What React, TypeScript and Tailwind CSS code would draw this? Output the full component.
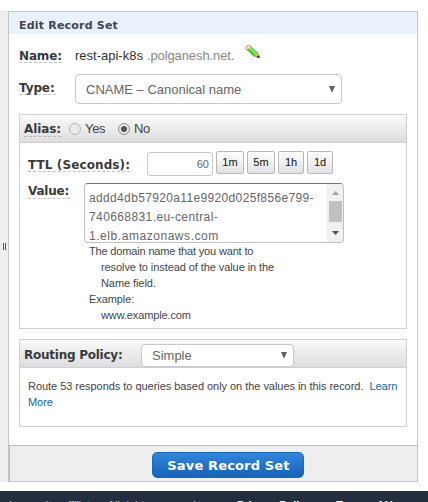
import type { ReactNode } from "react";

const sans = "font-['Liberation_Sans',Arial,sans-serif]";
const wide = "font-['DejaVu_Sans',Verdana,sans-serif] font-bold";

function Label({ children, className = "" }: { children: ReactNode; className?: string }) {
  return (
    <span
      className={`${wide} block h-4 shrink-0 whitespace-nowrap border-b border-dashed text-[12px] leading-[17px] text-[#3a3a3a] ${className}`}
    >
      {children}
    </span>
  );
}

function Caret({ className = "" }: { className?: string }) {
  return (
    <svg className={`shrink-0 ${className}`} width="6" height="6" viewBox="0 0 6 6">
      <path d="M0 0H6L3.4 6H2.6Z" fill="#606060" />
    </svg>
  );
}

function Radio({ checked = false }: { checked?: boolean }) {
  return (
    <span
      className={`flex size-3 shrink-0 items-center justify-center rounded-full border bg-[#e9e9e9] ${
        checked ? "border-[#8f8f8f]" : "border-[#b4b4b4]"
      }`}
    >
      {checked && <span className="size-1.5 rounded-full bg-[#555]" />}
    </span>
  );
}

function Pencil() {
  return (
    <svg className="ml-[11px] mt-[10px] shrink-0" width="16" height="16" viewBox="0 0 16 16">
      <path d="M1.2 4.8C.8 2.5 2.5 1 4.8 1.4L6.2 2.6 2.5 6.2Z" fill="#fff0db" stroke="#d97850" strokeWidth="1" />
      <path d="M2.4 5.9 6 2.4 13 8.6 9.5 12.8Z" fill="#54cf38" />
      <path d="M3.9 4.4 5.1 3.3 12 9.3 10.9 10.5Z" fill="#86ed62" />
      <path d="M2.4 5.9 9.5 12.8" stroke="#399326" strokeWidth=".8" />
      <path d="M9.4 12.5 13 8.6 14.6 13.7Z" fill="#dfc080" stroke="#ad8849" strokeWidth=".5" />
      <path d="M11 13.2 14.1 10.9 14.8 14Z" fill="#303440" />
    </svg>
  );
}

const presets = [
  { text: "1m", width: "w-7" },
  { text: "5m", width: "w-7" },
  { text: "1h", width: "w-[26px]" },
  { text: "1d", width: "w-[26px]" },
];

export default function App() {
  return (
    <div className={`${sans} h-[502px] w-[428px] overflow-hidden bg-white pt-[11px] text-[#444]`}>
      <div className="flex h-[471px]">
        <div className="flex w-2 shrink-0 items-start bg-[#eee] pl-[3px] pt-[232px]">
          <span className="h-[7px] w-[3px] border-x border-[#555]" />
        </div>

        <section className="flex w-[410px] flex-col border border-[#c6c6c6]">
          <h1 className={`${wide} h-[22px] bg-[#e8f1fc] pl-[10px] text-[11px] leading-[27px] tracking-[0.2px] text-[#3f4652]`}>
            Edit Record Set
          </h1>

          <div className="flex h-[411px] shrink-0 flex-col px-[10px]">
            <div className="flex h-[36px] items-start">
              <Label className="mt-[13px] w-[43px] border-[#c4c4c4] pt-px tracking-[-0.15px]">Name:</Label>
              <span className="ml-[13px] mt-[14px] text-[13px] leading-[16px] text-[#333]">rest-api-k8s</span>
              <span className="ml-[4px] mt-[14px] text-[13px] leading-[16px] tracking-[-0.1px] text-[#888]">.polganesh.net.</span>
              <Pencil />
            </div>

            <div className="flex h-[44px] items-start pt-[4px]">
              <Label className="mt-[5px] w-[37px] border-[#c4c4c4] pt-px tracking-[-0.1px]">Type:</Label>
              <div className="ml-[19px] flex h-[30px] w-[267px] items-center justify-between rounded-[4px] border border-[#c8c8c8] pl-[10px] pr-[6px] text-[13px] text-[#666]">
                <span className="mt-px">CNAME – Canonical name</span>
                <Caret className="-mt-px" />
              </div>
            </div>

            <div className="h-[215px] w-[388px] shrink-0 border border-[#d0d0d0]">
              <div className="flex h-7 items-center border-b border-[#d0d0d0] bg-linear-to-b from-[#fafafa] to-[#dddde0] pl-1">
                <Label className="w-[37px] border-[#b8b8b8] tracking-[-0.1px]">Alias:</Label>
                <span className="ml-2 flex"><Radio /></span>
                <span className="ml-[4px] w-[33px] text-[13px] tracking-[-0.3px]">Yes</span>
                <Radio checked />
                <span className="ml-1 text-[13px] tracking-[-0.3px]">No</span>
              </div>

              <div className="flex h-[40px] items-start pl-2 pt-[8px]">
                <Label className="mt-[5px] w-[102px] border-[#c4c4c4] pt-px tracking-[0.1px]">TTL (Seconds):</Label>
                <div className="ml-[17px] mt-px h-6 w-[66px] rounded-[3px] border border-[#c8c8c8] pr-[3px] text-right text-[11px] leading-[23px] text-[#666]">
                  60
                </div>
                <div className="ml-[3px] flex gap-[3px]">
                  {presets.map(({ text, width }) => (
                    <button
                      key={text}
                      className={`${width} h-[23px] rounded-[2px] border border-[#b9b9b9] bg-linear-to-b from-white to-[#e2e2e4] text-[11px] leading-[21px] text-[#111]`}
                    >
                      {text}
                    </button>
                  ))}
                </div>
              </div>

              <div className="flex h-[60px] items-start pl-2">
                <Label className="w-[42px] border-[#c4c4c4] tracking-[-0.2px]">Value:</Label>
                <div className="ml-[14px] flex h-[60px] w-[260px] overflow-hidden rounded-[4px] border border-[#c0c0c0] border-t-[#777]">
                  <div className="w-[242px] pl-1 pt-[5px] text-[12px] leading-[19px] text-[#666]">
                    <div className="whitespace-nowrap tracking-[0.35px]">addd4db57920a11e9920d025f856e799-</div>
                    <div className="tracking-[0.4px]">740668831.eu-central-</div>
                    <div className="tracking-[0.55px]">1.elb.amazonaws.com</div>
                  </div>
                  <div className="flex w-4 flex-col items-center bg-[#f1f1f1]">
                    <svg width="7" height="4" viewBox="0 0 7 4" className="mt-[7px]">
                      <path d="M0 4 3.5 0 7 4Z" fill="#a3a3a3" />
                    </svg>
                    <span className="mt-[6px] h-[21px] w-[13px] bg-[#c1c1c1]" />
                    <svg width="7" height="4" viewBox="0 0 7 4" className="mt-[9px]">
                      <path d="M0 0H7L3.5 4Z" fill="#505050" />
                    </svg>
                  </div>
                </div>
              </div>

              <div className="pl-[69px] text-[11px] leading-4 tracking-[-0.08px]">
                <p className="tracking-[-0.16px]">The domain name that you want to</p>
                <p className="pl-[12px]">resolve to instead of the value in the</p>
                <p className="pl-[12px]">Name field.</p>
                <p>Example:</p>
                <p className="pl-[12px] tracking-[-0.12px]">www.example.com</p>
              </div>
            </div>

            <div className="mt-[10px] h-[88px] w-[388px] shrink-0 border border-[#d0d0d0]">
              <div className="flex h-7 items-start border-b border-[#d0d0d0] bg-linear-to-b from-[#fafafa] to-[#dddde0] pl-1 pt-1">
                <Label className="mt-[3px] w-[99px] border-transparent tracking-[-0.25px]">Routing Policy:</Label>
                <div className="ml-[18px] flex h-[23px] w-[153px] items-center justify-between rounded-[4px] border border-[#c8c8c8] bg-white pl-[10px] pr-[6px] text-[13px] text-[#666]">
                  <span className="mt-px">Simple</span>
                  <Caret className="-mt-px" />
                </div>
              </div>
              <p className="whitespace-nowrap pl-2 pt-[10px] text-[11px] leading-4 tracking-[-0.04px]">
                Route 53 responds to queries based only on the values in this record.&nbsp; <a className="text-[#1166a8]">Learn<br />More</a>
              </p>
            </div>
          </div>

          <footer className="flex min-h-0 flex-1 items-start border-l border-t border-[#bbb] bg-[#eee] pl-[142px] pt-[6px]">
            <button className={`${wide} h-[26px] w-[152px] shrink-0 rounded-[5px] border border-[#176bbf] bg-linear-to-b from-[#3286dc] to-[#1264bc] pl-px text-[13px] leading-[25px] tracking-[0.15px] text-white`}>
              Save Record Set
            </button>
          </footer>
        </section>
      </div>

      <div className="mt-[9px] flex h-[11px] items-start overflow-hidden whitespace-nowrap bg-[#232f3e] pt-[6px] text-[11px] leading-[16px] text-[#ccc]">
        <span className="w-[237px] shrink-0 pl-[9px]">
          <span className="tracking-[0.4px]">Inc. or its a</span>ffiliates. All rights reserved.
        </span>
        <span className="w-[99px] shrink-0 font-bold text-white">Privacy Policy</span>
        <span className="font-bold text-white">Terms of Use</span>
      </div>
    </div>
  );
}
